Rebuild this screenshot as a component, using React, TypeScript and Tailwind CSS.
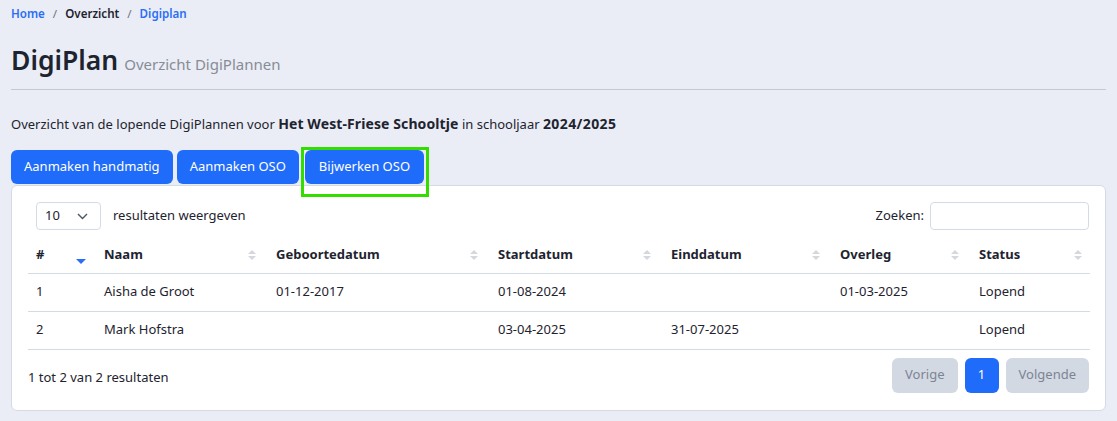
import React from 'react';

interface Row {
  nr: number;
  naam: string;
  geboortedatum: string;
  startdatum: string;
  einddatum: string;
  overleg: string;
  status: string;
}

const rows: Row[] = [
  { nr: 1, naam: 'Aisha de Groot', geboortedatum: '01-12-2017', startdatum: '01-08-2024', einddatum: '', overleg: '01-03-2025', status: 'Lopend' },
  { nr: 2, naam: 'Mark Hofstra', geboortedatum: '', startdatum: '03-04-2025', einddatum: '31-07-2025', overleg: '', status: 'Lopend' },
];

const columns = [
  { label: 'Naam', width: 'w-[172px]' },
  { label: 'Geboortedatum', width: 'w-[222px]' },
  { label: 'Startdatum', width: 'w-[173px]' },
  { label: 'Einddatum', width: 'w-[169px]' },
  { label: 'Overleg', width: 'w-[139px]' },
  { label: 'Status', width: 'w-[123px]' },
];

const SortIcon = ({ active }: { active?: boolean }) =>
  active ? (
    <svg width="10" height="6" viewBox="0 0 10 6" className="absolute right-[6px] top-[22px]">
      <path d="M0 0 L10 0 L5 5 Z" fill="#2a6ef7" />
    </svg>
  ) : (
    <svg width="8" height="12" viewBox="0 0 8 12" className="absolute right-[8px] top-1/2 -translate-y-1/2">
      <path d="M0 5 L4 1 L8 5 Z" fill="#d3d7de" />
      <path d="M0 7 L8 7 L4 11 Z" fill="#d3d7de" />
    </svg>
  );

const App: React.FC = () => {
  return (
    <div className="min-h-[421px] bg-[#eaedf5] px-[11px] pt-[5px] text-[13px] text-[#1e2330] font-['Noto_Sans','Open_Sans',sans-serif]">
      {/* Breadcrumb */}
      <nav className="flex items-center gap-[8px] text-[11.6px] font-semibold leading-[18px]">
        <span className="text-[#2a6ef7]">Home</span>
        <span className="text-[#6b7280] font-normal">/</span>
        <span>Overzicht</span>
        <span className="text-[#6b7280] font-normal">/</span>
        <span className="text-[#2a6ef7]">Digiplan</span>
      </nav>

      {/* Title */}
      <div className="mt-[19px] flex items-baseline gap-[6px]">
        <h1 className="text-[26.5px] font-semibold leading-[36px] text-[#1e2330]">DigiPlan</h1>
        <span className="text-[15px] text-[#878c96]">Overzicht DigiPlannen</span>
      </div>
      <hr className="mt-[11px] border-t border-[#c4c8cf]" />

      <p className="mt-[25px] leading-[18px]">
        Overzicht van de lopende DigiPlannen voor{' '}
        <b className="text-[14px] tracking-[0.1px]">Het West-Friese Schooltje</b> in schooljaar{' '}
        <b className="text-[14px] tracking-[0.4px]">2024/2025</b>
      </p>

      {/* Buttons */}
      <div className="mt-[17px] flex gap-[4px]">
        <button className="h-[34px] rounded-[6px] bg-[#1f6bfa] px-[13px] text-white">Aanmaken handmatig</button>
        <button className="h-[34px] rounded-[6px] bg-[#1f6bfa] px-[13px] text-white">Aanmaken OSO</button>
        <span className="relative ml-[2px]">
          <button className="h-[34px] rounded-[6px] bg-[#1f6bfa] px-[14px] text-white">Bijwerken OSO</button>
          <span className="pointer-events-none absolute -left-[4px] -right-[5px] -top-[3px] -bottom-[13px] border-[3px] border-[#33dd00]" />
        </span>
      </div>

      {/* Card */}
      <div className="mt-[1px] rounded-[6px] border border-[#d5dbe5] bg-white px-[16px] pt-[16px] pb-[17px]">
        <div className="flex items-center justify-between">
          <div className="flex items-center gap-[12px] pl-[8px]">
            <div className="flex h-[28px] w-[65px] items-center justify-between rounded-[4px] border border-[#d5dbe5] pl-[8px] pr-[12px]">
              <span>10</span>
              <svg width="11" height="7" viewBox="0 0 11 7">
                <path d="M1 1 L5.5 5.5 L10 1" stroke="#4b5563" strokeWidth="1.4" fill="none" />
              </svg>
            </div>
            <span>resultaten weergeven</span>
          </div>
          <div className="flex items-center gap-[6px]">
            <span>Zoeken:</span>
            <div className="h-[28px] w-[159px] rounded-[4px] border border-[#d5dbe5]" />
          </div>
        </div>

        <table className="mt-[7px] w-full table-fixed border-collapse">
          <thead>
            <tr className="h-[36px] border-b border-[#d5dbe5]">
              <th className="relative w-[64px] pl-[8px] text-left font-bold">
                #
                <SortIcon active />
              </th>
              {columns.map((c) => (
                <th key={c.label} className={`relative ${c.width} pl-[12px] text-left font-bold`}>
                  {c.label}
                  <SortIcon />
                </th>
              ))}
            </tr>
          </thead>
          <tbody>
            {rows.map((r) => (
              <tr key={r.nr} className="h-[38px] border-b border-[#d5dbe5]">
                <td className="pl-[8px]">{r.nr}</td>
                <td className="pl-[12px]">{r.naam}</td>
                <td className="pl-[12px]">{r.geboortedatum}</td>
                <td className="pl-[12px]">{r.startdatum}</td>
                <td className="pl-[12px]">{r.einddatum}</td>
                <td className="pl-[12px]">{r.overleg}</td>
                <td className="pl-[12px]">{r.status}</td>
              </tr>
            ))}
          </tbody>
        </table>

        <div className="mt-[8px] flex items-center justify-between">
          <span className="mt-[6px]">1 tot 2 van 2 resultaten</span>
          <div className="flex gap-[7px]">
            <button className="h-[35px] rounded-[6px] bg-[#d3d9e3] px-[13px] text-[#7c8494]">Vorige</button>
            <button className="h-[35px] w-[34px] rounded-[6px] bg-[#1f6bfa] text-white">1</button>
            <button className="h-[35px] rounded-[6px] bg-[#d3d9e3] px-[13px] text-[#7c8494]">Volgende</button>
          </div>
        </div>
      </div>
    </div>
  );
};

export default App;
